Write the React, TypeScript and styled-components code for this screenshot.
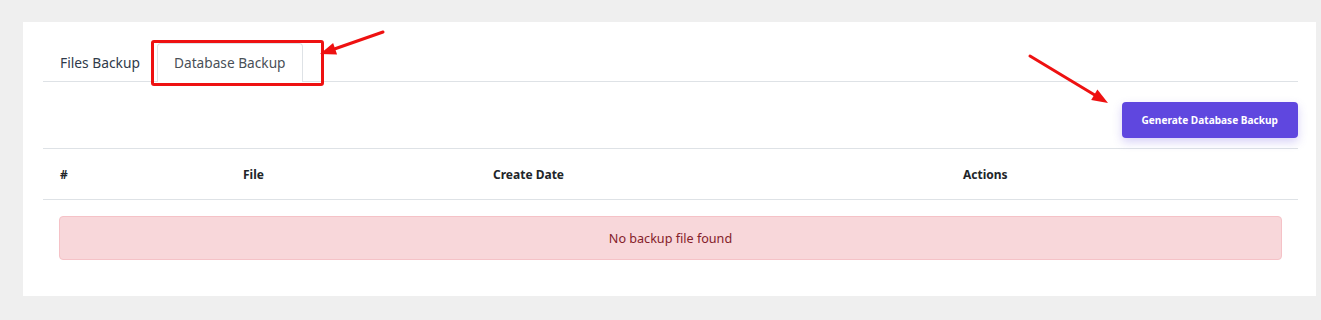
import React from "react";
import styled, { createGlobalStyle } from "styled-components";

const GlobalStyle = createGlobalStyle`
  html, body {
    margin: 0;
    padding: 0;
    background: #efefef;
    font-family: "Noto Sans", "Open Sans", sans-serif;
  }
`;

const Page = styled.div`
  position: relative;
  width: 1321px;
  height: 320px;
  box-sizing: border-box;
  padding: 22px 5px 0 23px;
`;

const Card = styled.div`
  background: #fff;
  height: 274px;
  box-sizing: border-box;
  padding: 21px 18px 0 20px;
`;

const TabBar = styled.div`
  display: flex;
  border-bottom: 1px solid #dee2e6;
`;

const Tab = styled.div<{ $active?: boolean }>`
  position: relative;
  height: 39px;
  box-sizing: border-box;
  display: flex;
  align-items: center;
  padding: 0 16px 2px;
  border: 1px solid ${(p) => (p.$active ? "#dee2e6" : "transparent")};
  border-bottom: none;
  border-radius: 4px 4px 0 0;
  margin-bottom: -1px;
  background: ${(p) => (p.$active ? "#fff" : "transparent")};
  color: ${(p) => (p.$active ? "#495057" : "#2f3a4a")};
  font-size: ${(p) => (p.$active ? "13.7px" : "13.8px")};
  cursor: pointer;

  ${(p) =>
    p.$active &&
    `
    &::after {
      content: "";
      position: absolute;
      left: -7px;
      right: -22px;
      top: -4px;
      bottom: -4px;
      border: 3px solid #ee1111;
      border-radius: 3px;
    }
  `}
`;

const Toolbar = styled.div`
  display: flex;
  justify-content: flex-end;
  padding: 20px 0 10px;
`;

const PrimaryButton = styled.button`
  height: 36px;
  padding: 0 20px;
  border: none;
  border-radius: 4px;
  background: #5f47df;
  color: #fff;
  font-family: inherit;
  font-size: 10.1px;
  font-weight: 700;
  box-shadow: 0 4px 10px rgba(95, 71, 223, 0.25);
  cursor: pointer;
`;

const Table = styled.div`
  border-top: 1px solid #dee2e6;
`;

const HeaderRow = styled.div`
  display: grid;
  grid-template-columns: 183px 250px 470px 1fr;
  height: 50px;
  align-items: center;
  border-bottom: 1px solid #dee2e6;
`;

const HeadCell = styled.div`
  padding-left: 17px;
  font-size: 12px;
  font-weight: 700;
  color: #212529;
`;

const Body = styled.div`
  padding: 16px 16px 0;
`;

const Alert = styled.div`
  height: 44px;
  box-sizing: border-box;
  display: flex;
  align-items: center;
  justify-content: center;
  background: #f8d7da;
  border: 1px solid #f5c2c7;
  border-radius: 4px;
  color: #842029;
  font-size: 12.6px;
`;

const Annotations = styled.svg`
  position: absolute;
  left: 0;
  top: 0;
  pointer-events: none;
`;

const Arrow = ({ x1, y1, x2, y2 }: { x1: number; y1: number; x2: number; y2: number }) => {
  const a = Math.atan2(y2 - y1, x2 - x1);
  const len = 16;
  const w = 6;
  const bx = x2 - len * Math.cos(a);
  const by = y2 - len * Math.sin(a);
  const px = -Math.sin(a) * w;
  const py = Math.cos(a) * w;
  return (
    <g>
      <line x1={x1} y1={y1} x2={bx} y2={by} stroke="#ee1111" strokeWidth={3} strokeLinecap="round" />
      <polygon points={`${x2},${y2} ${bx + px},${by + py} ${bx - px},${by - py}`} fill="#ee1111" />
    </g>
  );
};

const App = () => {
  return (
    <>
      <GlobalStyle />
      <Page>
        <Card>
          <TabBar>
            <Tab>Files Backup</Tab>
            <Tab $active>Database Backup</Tab>
          </TabBar>
          <Toolbar>
            <PrimaryButton>Generate Database Backup</PrimaryButton>
          </Toolbar>
          <Table>
            <HeaderRow>
              <HeadCell>#</HeadCell>
              <HeadCell>File</HeadCell>
              <HeadCell>Create Date</HeadCell>
              <HeadCell>Actions</HeadCell>
            </HeaderRow>
            <Body>
              <Alert>No backup file found</Alert>
            </Body>
          </Table>
        </Card>
        <Annotations width={1321} height={320}>
          <Arrow x1={383} y1={32} x2={320} y2={54} />
          <Arrow x1={1030} y1={56} x2={1108} y2={103} />
        </Annotations>
      </Page>
    </>
  );
};

export default App;
